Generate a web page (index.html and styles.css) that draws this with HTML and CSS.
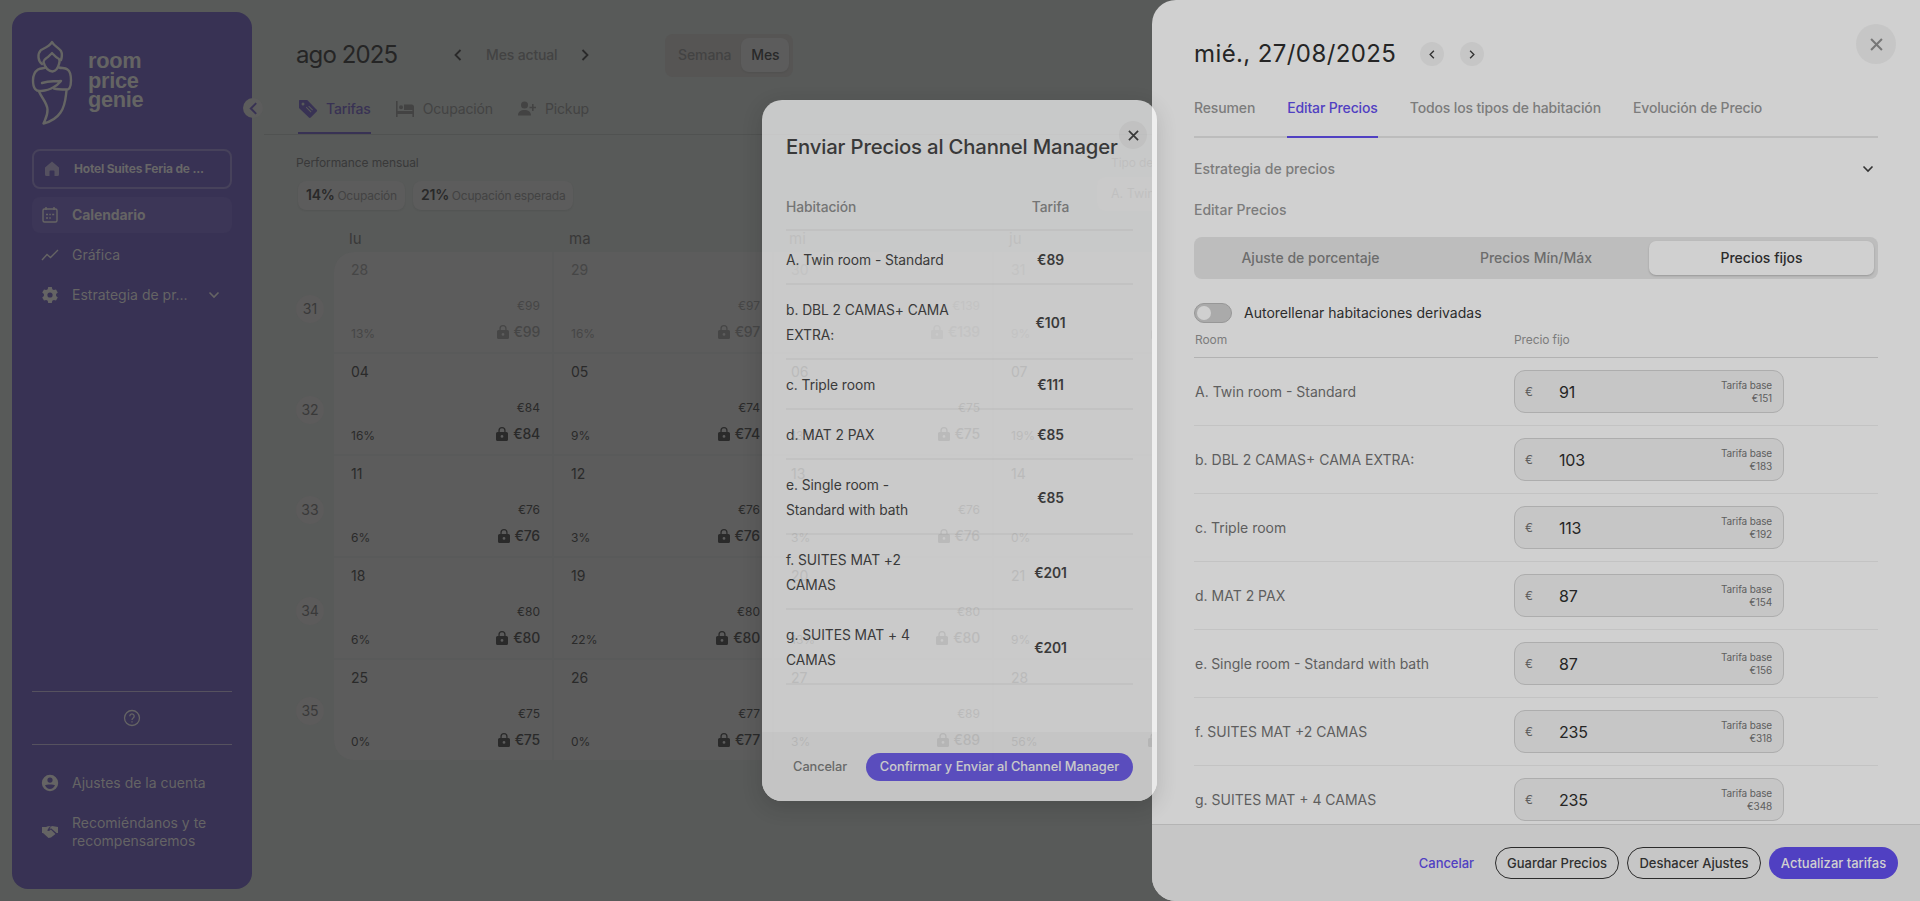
FILE: index.html
```html
<!DOCTYPE html>
<html lang="es">
<head>
<meta charset="utf-8">
<title>RoomPriceGenie</title>
<link rel="stylesheet" href="styles.css">
</head>
<body>
<svg class="defs" aria-hidden="true">
  <symbol id="lock" viewBox="0 0 12 14"><path fill="currentColor" fill-rule="evenodd" d="M6 0a3.600 3.600 0 0 1 3.600 3.600V5h.8A1.600 1.600 0 0 1 12 6.600v5.800a1.600 1.600 0 0 1-1.600 1.600H1.600A1.600 1.600 0 0 1 0 12.400V6.600A1.600 1.600 0 0 1 1.600 5h.8V3.600A3.600 3.600 0 0 1 6 0zm0 1.300a2.300 2.300 0 0 0-2.300 2.300V5h4.600V3.600A2.300 2.300 0 0 0 6 1.300zM6 8a1.400 1.400 0 1 0 0 2.800A1.400 1.400 0 0 0 6 8z"/></symbol>
  <symbol id="left" viewBox="0 0 8 12"><path d="M6.500 1 1.500 6l5 5" fill="none" stroke="currentColor" stroke-width="1.800"/></symbol>
  <symbol id="right" viewBox="0 0 8 12"><path d="m1.500 1 5 5-5 5" fill="none" stroke="currentColor" stroke-width="1.800"/></symbol>
  <symbol id="down" viewBox="0 0 12 8"><path d="m1.500 1.500 4.500 4.500 4.500-4.500" fill="none" stroke="currentColor" stroke-width="1.600"/></symbol>
  <symbol id="cross" viewBox="0 0 12 12"><path d="m1 1 10 10M11 1 1 11" fill="none" stroke="currentColor" stroke-width="1.900"/></symbol>
</svg>

<div class="app">
  <aside class="sidebar">
    <div class="brand">
      <svg class="genie" width="44" height="90" viewBox="30 38 44 90" fill="none" stroke="currentColor" stroke-width="2.400" stroke-linejoin="round" stroke-linecap="round">
        <path d="M42 64c-4-3-5-10-1-14 4-2 9-4 11-8 2 4 6 5 9 9 1.500 3 1 6 0 9"/>
        <path d="M43.500 62c0-2 1.500-3 3-4 2-1 3.500-3 5.500-5 2 2 3.500 4 5.500 5 2.500 1 2.500 3 1.500 6-1 4-3 7-6.500 7.500-4-.5-7.500-4-9-9.500z"/>
        <path d="M46 67.500c-2 1-5 .5-8 2-3 2-5 5-5 11 0 8 3 11 8 10.500 5-.5 8-1 12-3.500 3-1.500 6-4 8-6.500-7 1-10-1-19 2"/>
        <path d="M59 67.500c3 1 6 0 8.500 2 3 2 3.500 6 3.500 11 0 7-2 9.500-5 9-5 0-8 0-12-1"/>
        <path d="M39 91.500c3 7 8 11 8.500 18 .3 6-2 9-4 14 8-2 13-5 17-11 5-7 5-14 6-22"/>
      </svg>
      <div class="wordmark">room<br>price<br>genie</div>
    </div>
    <div class="hotel">
      <svg width="16" height="16" viewBox="0 0 16 16"><path fill="currentColor" d="M8 .5 15 6.500V13.500a1.500 1.500 0 0 1-1.500 1.500H10.500V10.500a1 1 0 0 0-1-1h-3a1 1 0 0 0-1 1V15H2.500A1.500 1.500 0 0 1 1 13.500V6.500z"/></svg>
      <span>Hotel Suites Feria de ...</span>
    </div>
    <nav class="nav">
      <a class="nav-item active"><svg width="18" height="18" viewBox="0 0 18 18" fill="none" stroke="currentColor" stroke-width="1.400"><rect x="2" y="3" width="14" height="13" rx="1.500"/><path d="M5 1v3M13 1v3"/><path d="M5 8.500h2M8.300 8.500h1.500M11.200 8.500h2M5 12h2M8.300 12h1.500" stroke-width="1.600"/></svg>Calendario</a>
      <a class="nav-item"><svg width="18" height="18" viewBox="0 0 18 18" fill="none" stroke="currentColor" stroke-width="1.400"><path d="m1 14 5-5.500 3.500 3L17 4"/></svg>Gráfica</a>
      <a class="nav-item"><svg width="18" height="18" viewBox="0 0 18 18"><path fill="currentColor" fill-rule="evenodd" d="M7.200 1h3.600l.5 2.200 1.500.9 2.200-.7 1.800 3.200L15.100 8v2l1.700 1.400-1.800 3.200-2.200-.7-1.500.9-.5 2.200H7.200l-.5-2.200-1.500-.9-2.200.7-1.800-3.200L2.900 10V8L1.200 6.600 3 3.400l2.200.7 1.500-.9zM9 6.400a2.600 2.600 0 1 0 0 5.200 2.600 2.600 0 0 0 0-5.200z"/></svg>Estrategia de pr...<svg class="more" width="12" height="8"><use href="#down"/></svg></a>
    </nav>
    <div class="help"><svg width="18" height="18" viewBox="0 0 18 18" fill="none" stroke="currentColor" stroke-width="1.300"><circle cx="9" cy="9" r="7.500"/><path d="M6.800 7.200a2.200 2.200 0 1 1 3.400 1.800C9.300 9.600 9 10 9 11M9 12.200v1.400"/></svg></div>
    <nav class="nav foot">
      <a class="nav-item"><svg width="18" height="18" viewBox="0 0 18 18"><path fill="currentColor" fill-rule="evenodd" d="M9 .8a8.200 8.200 0 1 1 0 16.400A8.200 8.200 0 0 1 9 .8zM9 3.500a2.600 2.600 0 1 0 0 5.200 2.600 2.600 0 0 0 0-5.200zM4 11.300c1 2.400 2.800 3.600 5 3.600s4-1.200 5-3.600c-1.500-1.200-8.500-1.200-10 0z"/></svg>Ajustes de la cuenta</a>
      <a class="nav-item tall"><svg width="18" height="14" viewBox="0 0 18 14"><path fill="currentColor" d="M1 2h4l2-.8h3L8 2.600 6.200 5.500c1.500 1 2.800.3 3.600-.9L14.500 9 10 12.500 7.500 13 2 8H1zM11 1l6 1v6h-1.500L10 3.200l-1.600 1.400L9.500 2z"/></svg><span>Recomiéndanos y te recompensaremos</span></a>
    </nav>
    <div class="collapse"><svg width="9" height="13"><use href="#left"/></svg></div>
  </aside>

  <main class="main">
    <header class="top">
      <h1>ago 2025</h1>
      <div class="pager"><svg width="8" height="12"><use href="#left"/></svg><span>Mes actual</span><svg width="8" height="12"><use href="#right"/></svg></div>
      <div class="switch"><span>Semana</span><span class="on">Mes</span></div>
    </header>
    <div class="tabs">
      <a class="tab on"><svg width="20" height="20" viewBox="0 0 20 20"><path fill="currentColor" fill-rule="evenodd" d="M1.500 1h7.700l9.500 9.700c.5.500.5 1.300 0 1.800l-6 6c-.5.500-1.300.500-1.800 0L1 9V1.500zM5 3.500a1.500 1.500 0 1 0 0 3 1.500 1.500 0 0 0 0-3zm3.500 4.200-.7.700 5 5 .7-.7zm2.500-1-.7.700 4 4 .7-.7z"/></svg>Tarifas</a>
      <a class="tab"><svg width="20" height="20" viewBox="0 0 20 20"><path fill="currentColor" d="M1 2h1.600v10h14.800V8H19v10h-1.600v-3H2.600v3H1zM6 6.300a2 2 0 1 1 0 4 2 2 0 0 1 0-4zM9 5.500h7.500A2.500 2.500 0 0 1 19 8v3H9z"/></svg>Ocupación</a>
      <a class="tab"><svg width="20" height="20" viewBox="0 0 20 20"><circle cx="7.500" cy="6" r="3.500" fill="currentColor"/><path fill="currentColor" d="M1 16.500c0-4 3-5.500 6.500-5.500s6.500 1.500 6.500 5.500zM15 5h1.600v2.700H19v1.600h-2.400V12H15V9.300h-2.500V7.700H15z"/></svg>Pickup</a>
    </div>
    <div class="perf">
      <div>
        <p class="label">Performance mensual</p>
        <div class="chips"><span class="chip"><b>14%</b> Ocupación</span><span class="chip"><b>21%</b> Ocupación esperada</span></div>
      </div>
      <div class="room-filter"><p class="label">Tipo de habitación</p><div class="select">A. Twin room - Standard</div></div>
    </div>
    <div class="calendar">
      <div class="weeks"><i>31</i><i>32</i><i>33</i><i>34</i><i>35</i></div>
      <div class="days">
        <div class="dow"><span>lu</span><span>ma</span><span>mi</span><span>ju</span></div>
        <div class="grid">
          <div class="cell past"><p>28</p><small>€99</small><div><em>13%</em><svg><use href="#lock"/></svg><b>€99</b></div></div>
          <div class="cell past"><p>29</p><small>€97</small><div><em>16%</em><svg><use href="#lock"/></svg><b>€97</b></div></div>
          <div class="cell past"><p>30</p><small>€139</small><div><em></em><svg><use href="#lock"/></svg><b>€139</b></div></div>
          <div class="cell past"><p>31</p><small>€139</small><div><em>9%</em><svg><use href="#lock"/></svg><b>€139</b></div></div>
          <div class="cell"><p>04</p><small>€84</small><div><em>16%</em><svg><use href="#lock"/></svg><b>€84</b></div></div>
          <div class="cell"><p>05</p><small>€74</small><div><em>9%</em><svg><use href="#lock"/></svg><b>€74</b></div></div>
          <div class="cell"><p>06</p><small>€75</small><div><em>13%</em><svg><use href="#lock"/></svg><b>€75</b></div></div>
          <div class="cell"><p>07</p><small>€75</small><div><em>19%</em><svg><use href="#lock"/></svg><b>€75</b></div></div>
          <div class="cell"><p>11</p><small>€76</small><div><em>6%</em><svg><use href="#lock"/></svg><b>€76</b></div></div>
          <div class="cell"><p>12</p><small>€76</small><div><em>3%</em><svg><use href="#lock"/></svg><b>€76</b></div></div>
          <div class="cell"><p>13</p><small>€76</small><div><em>3%</em><svg><use href="#lock"/></svg><b>€76</b></div></div>
          <div class="cell"><p>14</p><small>€76</small><div><em>0%</em><svg><use href="#lock"/></svg><b>€76</b></div></div>
          <div class="cell"><p>18</p><small>€80</small><div><em>6%</em><svg><use href="#lock"/></svg><b>€80</b></div></div>
          <div class="cell"><p>19</p><small>€80</small><div><em>22%</em><svg><use href="#lock"/></svg><b>€80</b></div></div>
          <div class="cell"><p>20</p><small>€80</small><div><em>13%</em><svg><use href="#lock"/></svg><b>€80</b></div></div>
          <div class="cell"><p>21</p><small>€80</small><div><em>9%</em><svg><use href="#lock"/></svg><b>€80</b></div></div>
          <div class="cell"><p>25</p><small>€75</small><div><em>0%</em><svg><use href="#lock"/></svg><b>€75</b></div></div>
          <div class="cell"><p>26</p><small>€77</small><div><em>0%</em><svg><use href="#lock"/></svg><b>€77</b></div></div>
          <div class="cell"><p>27</p><small>€89</small><div><em>3%</em><svg><use href="#lock"/></svg><b>€89</b></div></div>
          <div class="cell"><p>28</p><small>€200</small><div><em>56%</em><svg><use href="#lock"/></svg><b>€200</b></div></div>
        </div>
      </div>
    </div>
  </main>
</div>

<section class="drawer">
  <div class="drawer-body">
    <div class="drawer-title"><h2>mié., 27/08/2025</h2><span class="round"><svg width="6" height="9"><use href="#left"/></svg></span><span class="round"><svg width="6" height="9"><use href="#right"/></svg></span></div>
    <div class="drawer-tabs"><a>Resumen</a><a class="on">Editar Precios</a><a>Todos los tipos de habitación</a><a>Evolución de Precio</a></div>
    <div class="accordion"><span>Estrategia de precios</span><svg width="12" height="8"><use href="#down"/></svg></div>
    <div class="section-label">Editar Precios</div>
    <div class="modes"><span>Ajuste de porcentaje</span><span>Precios Mín/Máx</span><span class="on">Precios fijos</span></div>
    <div class="auto"><span class="toggle"></span>Autorellenar habitaciones derivadas</div>
    <div class="rates-head"><span>Room</span><span>Precio fijo</span></div>
    <div class="rate"><span>A. Twin room - Standard</span><div class="field"><i>€</i><b>91</b><small>Tarifa base<br>€151</small></div></div>
    <div class="rate"><span>b. DBL 2 CAMAS+ CAMA EXTRA:</span><div class="field"><i>€</i><b>103</b><small>Tarifa base<br>€183</small></div></div>
    <div class="rate"><span>c. Triple room</span><div class="field"><i>€</i><b>113</b><small>Tarifa base<br>€192</small></div></div>
    <div class="rate"><span>d. MAT 2 PAX</span><div class="field"><i>€</i><b>87</b><small>Tarifa base<br>€154</small></div></div>
    <div class="rate"><span>e. Single room - Standard with bath</span><div class="field"><i>€</i><b>87</b><small>Tarifa base<br>€156</small></div></div>
    <div class="rate"><span>f. SUITES MAT +2 CAMAS</span><div class="field"><i>€</i><b>235</b><small>Tarifa base<br>€318</small></div></div>
    <div class="rate"><span>g. SUITES MAT + 4 CAMAS</span><div class="field"><i>€</i><b>235</b><small>Tarifa base<br>€348</small></div></div>
  </div>
  <footer class="drawer-foot"><a>Cancelar</a><button class="line w1">Guardar Precios</button><button class="line w2">Deshacer Ajustes</button><button class="solid">Actualizar tarifas</button></footer>
  <span class="drawer-close"><svg width="13" height="13"><use href="#cross"/></svg></span>
</section>

<section class="modal">
  <div class="modal-body">
    <h3>Enviar Precios al Channel Manager</h3>
    <div class="trow thead"><span>Habitación</span><b>Tarifa</b></div>
    <div class="trow first"><span>A. Twin room - Standard</span><b>€89</b></div>
    <div class="trow two"><span>b. DBL 2 CAMAS+ CAMA<br>EXTRA:</span><b>€101</b></div>
    <div class="trow"><span>c. Triple room</span><b>€111</b></div>
    <div class="trow"><span>d. MAT 2 PAX</span><b>€85</b></div>
    <div class="trow two"><span>e. Single room -<br>Standard with bath</span><b>€85</b></div>
    <div class="trow two"><span>f. SUITES MAT +2<br>CAMAS</span><b>€201</b></div>
    <div class="trow two"><span>g. SUITES MAT + 4<br>CAMAS</span><b>€201</b></div>
  </div>
  <footer class="modal-foot"><a>Cancelar</a><button>Confirmar y Enviar al Channel Manager</button></footer>
  <span class="modal-close"><svg width="11" height="11"><use href="#cross"/></svg></span>
</section>
</body>
</html>
```
FILE: styles.css
```css
* { box-sizing: border-box; margin: 0; padding: 0; }
body { width: 1920px; height: 901px; overflow: hidden; position: relative; background: #585a59; font: 14px/20px Inter, "Liberation Sans", sans-serif; color: #3c3c3c; }
.defs { position: absolute; width: 0; height: 0; }
svg { flex: none; display: block; }
i, em { font-style: normal; }
button { font: inherit; border: 0; white-space: nowrap; }
.app { display: flex; height: 901px; padding: 12px 0 12px 12px; }

.sidebar { position: relative; flex: none; display: flex; flex-direction: column; width: 240px; height: 877px; border-radius: 16px; padding: 26px 20px 0; background: #383254; color: #656464; }
.brand { display: flex; height: 111px; margin-left: -2px; }
.genie { color: #656564; }
.wordmark { padding: 13px 0 0 14px; font: 700 21.800px/19.500px "Liberation Sans", sans-serif; letter-spacing: -.3px; color: #646463; }
.hotel { display: flex; align-items: center; height: 40px; padding-left: 10px; gap: 14px; border: 2px solid #47425b; border-radius: 8px; font-size: 12px; font-weight: 700; letter-spacing: -.2px; color: #676667; }
.hotel svg { color: #555160; }
.nav { padding-top: 8px; display: flex; flex-direction: column; gap: 4px; }
.nav-item { display: flex; align-items: center; gap: 13px; height: 36px; padding-left: 9px; border-radius: 8px; white-space: nowrap; }
.nav-item.active { background: #3c3657; font-weight: 700; letter-spacing: -.1px; }
.nav .more { margin-left: 7px; }
.help { margin-top: auto; height: 54px; display: flex; align-items: center; justify-content: center; border: solid #56525f; border-width: 1px 0; }
.foot { padding: 20px 0 35px; gap: 0; }
.nav-item.tall { height: 44px; margin-top: 9px; line-height: 18px; white-space: normal; }
.collapse { position: absolute; left: 231px; top: 86px; width: 20px; height: 20px; border-radius: 50%; background: #5c5c5c; color: #383254; display: flex; align-items: center; justify-content: center; }

.main { width: 1668px; padding-left: 12px; }
.top { display: flex; align-items: center; height: 86px; padding-left: 32px; }
h1 { width: 158px; font: 400 24px/30px Inter, sans-serif; letter-spacing: -.9px; color: #252525; }
.pager { display: flex; align-items: center; gap: 24px; width: 211px; color: #434343; font-weight: 500; letter-spacing: -.15px; }
.pager svg { color: #2a2a2a; }
.switch { display: flex; align-items: center; height: 43px; padding: 0 4px 0 13px; border-radius: 8px; background: #565554; color: #434343; font-weight: 500; letter-spacing: -.1px; }
.switch .on { margin-left: 10px; width: 48px; line-height: 34px; text-align: center; border-radius: 8px; background: #5c5c5c; color: #292929; box-shadow: 0 1px 2px #0001; }
.tabs { display: flex; gap: 24px; height: 37px; padding-left: 34px; border-bottom: 1px solid #505251; color: #434343; letter-spacing: -.15px; }
.tab { display: flex; gap: 8px; height: 36px; padding-top: 1px; align-items: flex-start; line-height: 20px; }
.tab.on { color: #383254; border-bottom: 2px solid #383254; font-weight: 500; }
.perf { display: flex; height: 93px; padding: 18px 0 0 32px; }
.perf > div:first-child { width: 815px; }
.label { font-size: 12px; letter-spacing: -.1px; color: #393939; }
.chips { display: flex; gap: 8px; padding: 8px 0 0 2px; }
.chip { padding: 0 8px; border-radius: 8px; line-height: 28px; font-size: 12px; letter-spacing: -.2px; word-spacing: -.5px; background: #5c5c5c; color: #434343; box-shadow: 0 1px 2px #0001; }
.chip b { font-size: 14px; font-weight: 600; color: #292929; }
.select { margin: 4px 0 0 -14px; padding-left: 14px; width: 250px; line-height: 34px; border-radius: 8px; background: #5c5c5c; font-size: 12.500px; }
.calendar { display: flex; }
.weeks { width: 70px; padding: 67px 0 0 32px; display: flex; flex-direction: column; gap: 72.500px; }
.weeks i { width: 28px; height: 28px; border-radius: 50%; line-height: 28px; text-align: center; background: #5c5b5b; color: #393939; }
.dow { display: grid; grid-template-columns: repeat(4, 220px); height: 24px; line-height: 22px; color: #383838; font-size: 15px; }
.dow span { padding-left: 15px; }
.grid { display: grid; grid-template-columns: repeat(4, 220px); grid-auto-rows: 102px; height: 508px; overflow: hidden; border-radius: 20px; background: #5c5c5c; }
.cell { border: solid #595a5a; border-width: 0 2px 2px 0; padding: 8px 12px 0 17px; color: #2a2a2a; }
.cell.past { color: #464646; }
.cell p { height: 36px; }
.cell small { display: block; font-size: 12px; text-align: right; }
.cell div { display: flex; align-items: center; height: 32px; }
.cell em { font-size: 12px; flex: 1; padding-top: 4px; }
.cell div svg { width: 12px; height: 14px; margin-right: 5px; }
.cell b { font-weight: 500; letter-spacing: -.2px; }

.drawer { position: absolute; left: 1152px; top: 0; width: 768px; height: 901px; border-radius: 24px 0 0 24px; background: #d0d0d0; overflow: hidden; display: flex; flex-direction: column; color: #5e5e5e; }
.drawer-body { height: 824px; overflow: hidden; padding: 36px 42px 0; flex: none; }
.drawer-title { display: flex; align-items: center; height: 36px; gap: 16px; }
h2 { font: 400 24px/36px Inter, sans-serif; letter-spacing: .4px; color: #252525; width: 210px; white-space: nowrap; }
.round { width: 24px; height: 24px; border-radius: 50%; background: #c6c6c6; color: #333; display: flex; align-items: center; justify-content: center; }
.drawer-tabs { display: flex; gap: 32px; height: 41px; margin-top: 25px; border-bottom: 2px solid #bcbcbc; color: #7c7c7c; line-height: 22px; }
.drawer-tabs a { height: 41px; white-space: nowrap; font-weight: 500; letter-spacing: -.14px; }
.drawer-tabs .on { color: #5040c2; border-bottom: 2px solid #5040c2; }
.accordion { display: flex; justify-content: space-between; align-items: center; padding-right: 4px; margin-top: 21px; height: 20px; color: #7c7c7c; font-weight: 500; }
.accordion svg { color: #333; }
.section-label { margin-top: 21px; height: 37px; color: #7c7c7c; font-weight: 500; }
.modes { display: grid; grid-template-columns: 225px 226px 225px; height: 42px; padding: 4px; border-radius: 8px; background: #bdbdbd; color: #6c6c6c; font-weight: 500; text-align: center; line-height: 34px; }
.modes .on { background: #d0d0d0; color: #2b2b2b; border-radius: 7px; box-shadow: 0 1px 2px #0003; }
.auto { display: flex; align-items: center; gap: 12px; height: 20px; margin-top: 24px; color: #2c2c2c; }
.toggle { width: 38px; height: 20px; border-radius: 10px; border: 1px solid #979797; background: #aaa; padding: 2px; }
.toggle::before { content: ""; display: block; width: 14px; height: 14px; border-radius: 50%; background: #d0d0d0; }
.rates-head { display: flex; height: 35px; padding: 7px 0 0 1px; border-bottom: 1px solid #b2b2b2; font-size: 12px; letter-spacing: -.1px; color: #7c7c7c; }
.rates-head span:first-child, .rate > span { width: 319px; }
.rate { display: flex; align-items: center; height: 68px; padding-left: 1px; border-bottom: 1px solid #c3c3c3; }
.field { display: flex; align-items: center; width: 270px; height: 43px; padding: 0 11px 0 10px; border: 1px solid #adadad; border-radius: 11px; background: #c6c6c6; }
.field i { width: 34px; font-size: 12px; }
.field b { flex: 1; font-weight: 400; font-size: 16px; letter-spacing: -.2px; color: #252525; }
.field small { font-size: 10px; line-height: 13.500px; letter-spacing: -.15px; text-align: right; padding-top: 1px; }
.drawer-foot { flex: 1; display: flex; align-items: center; justify-content: flex-end; gap: 8px; padding: 0 22px 0 0; border-top: 1px solid #b4b4b4; background: #c6c6c6; font-size: 13px; font-weight: 500; letter-spacing: -.05px; }
.drawer-foot a { color: #5040c2; margin-right: 13px; }
.drawer-foot button { height: 32px; border-radius: 16px; }
.line { border: 1px solid #2b2b2b; background: none; color: #2f2f2f; }
.w1 { width: 124px; }
.w2 { width: 134px; }
.solid { width: 129px; background: #5040c2; color: #d0d0d0; }
.drawer-close { position: absolute; left: 704px; top: 24px; width: 40px; height: 40px; border-radius: 50%; background: #c6c6c6; color: #777; display: flex; align-items: center; justify-content: center; }

.modal { position: absolute; left: 762px; top: 100px; width: 395px; height: 701px; opacity: .683; border-radius: 20px; background: #fdfdfd; color: #2b2b2b; display: flex; flex-direction: column; box-shadow: 0 6px 20px #0003; }
.modal-body { flex: none; height: 632px; padding: 32px 24px 0; }
h3 { font: 500 20.300px/30px Inter, sans-serif; letter-spacing: -.16px; white-space: nowrap; height: 53px; }
.trow { display: flex; align-items: center; height: 50px; padding-top: 3px; border-bottom: 2px solid #f2f2f2; line-height: 24.700px; font-size: 13.800px; letter-spacing: -.05px; }
.trow span { width: 230px; white-space: nowrap; }
.trow b { width: 69px; text-align: center; font-weight: 600; }
.trow.thead { height: 46px; padding-top: 0; color: #828282; font-weight: 500; }
.thead b { font-weight: 500; }
.trow.first { height: 54px; padding-top: 7px; }
.trow.two { height: 75px; }
.modal-foot { flex: 1; display: flex; align-items: center; justify-content: flex-end; gap: 19px; padding-right: 24px; background: #f6f6f6; border-radius: 0 0 20px 20px; font-size: 12.800px; font-weight: 500; letter-spacing: -.1px; }
.modal-foot a { color: #707070; }
.modal-foot button { width: 267px; height: 28px; border-radius: 14px; background: #5b48ec; color: #fff; }
.modal-close { position: absolute; left: 357px; top: 21px; width: 28px; height: 28px; border-radius: 50%; background: #f2f2f2; display: flex; align-items: center; justify-content: center; }
```
